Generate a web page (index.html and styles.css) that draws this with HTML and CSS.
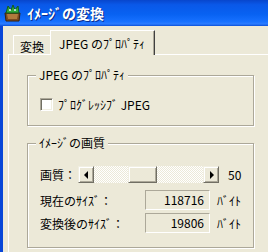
FILE: index.html
```html
<!DOCTYPE html>
<html lang="ja">
<head>
    <meta charset="UTF-8">
    <title>イメージの変換</title>
    <link rel="stylesheet" href="styles.css">
</head>
<body>

    <div class="window">
        <div class="titlebar">
            <svg class="app-icon" width="19" height="18" viewBox="0 0 19 18">
                <path d="M2 9 L17 9 L16 17 L3 17 Z" fill="#7a4a22" stroke="#3b220c" stroke-width="1"/>
                <path d="M4 10 L15 10 L14 15 L5 15 Z" fill="#b07a3c"/>
                <path d="M3 9 L5 2 L8 6 L10 1 L12 6 L15 2 L16 9 Z" fill="#2fa83a" stroke="#145a1a" stroke-width="1"/>
                <circle cx="7" cy="6" r="1" fill="#e8f0ff"/>
                <circle cx="12" cy="6" r="1" fill="#e8f0ff"/>
            </svg>
            <span class="title">ｲﾒｰｼﾞの変換</span>
        </div>

        <div class="client">
            <div class="tabs">
                <div class="tab">変換</div>
                <div class="tab active">JPEG のﾌﾟﾛﾊﾟﾃｨ</div>
            </div>

            <div class="panel">
                <fieldset class="group">
                    <legend>JPEG のﾌﾟﾛﾊﾟﾃｨ</legend>
                    <label class="check">
                        <span class="check-box"></span>
                        ﾌﾟﾛｸﾞﾚｯｼﾌﾞ JPEG
                    </label>
                </fieldset>

                <fieldset class="group quality">
                    <legend>ｲﾒｰｼﾞの画質</legend>

                    <div class="row">
                        <span class="row-label short">画質：</span>
                        <div class="scrollbar">
                            <span class="sb-btn"><span class="arrow-left"></span></span>
                            <div class="sb-track"><span class="sb-thumb"></span></div>
                            <span class="sb-btn"><span class="arrow-right"></span></span>
                        </div>
                        <span class="value">50</span>
                    </div>

                    <div class="row size-row">
                        <span class="row-label">現在のｻｲｽﾞ：</span>
                        <span class="size-box">118716</span>
                        <span class="unit">ﾊﾞｲﾄ</span>
                    </div>

                    <div class="row size-row">
                        <span class="row-label">変換後のｻｲｽﾞ：</span>
                        <span class="size-box">19806</span>
                        <span class="unit">ﾊﾞｲﾄ</span>
                    </div>
                </fieldset>
            </div>
        </div>
    </div>

</body>
</html>
```

FILE: styles.css
```css
body {
    margin: 0;
    font-family: "Noto Sans CJK JP", "Liberation Sans", sans-serif;
    font-size: 12px;
    color: #000;
}

.window {
    width: 268px;
    height: 252px;
    display: flex;
    flex-direction: column;
    overflow: hidden;
}

/* タイトルバー */
.titlebar {
    flex: none;
    height: 26px;
    display: flex;
    align-items: center;
    gap: 5px;
    padding-left: 3px;
    color: #fff;
    background: linear-gradient(to bottom, #0846cc 0, #0a58e8 18%, #0862f2 55%, #1670ff 82%, #2b7cff 92%, #0a4fd8 100%);
}

.app-icon {
    flex: none;
}

.title {
    font-size: 14px;
    font-weight: bold;
    text-shadow: 1px 1px 0 #0a2c8c;
}

.client {
    flex: 1;
    display: flex;
    flex-direction: column;
    background: #ece9d8;
    border-left: 3px solid #0846d8;
    padding-top: 4px;
}

/* タブ */
.tabs {
    display: flex;
    align-items: flex-end;
    margin-left: 10px;
    position: relative;
    z-index: 1;
}

.tab {
    height: 19px;
    display: flex;
    align-items: center;
    padding: 2px 6px 0;
    border-top: 1px solid #fff;
    border-left: 1px solid #fff;
    border-right: 1px solid #aca899;
    box-sizing: border-box;
    background: #ece9d8;
}

.tab.active {
    height: 25px;
    margin-left: -1px;
    margin-bottom: -1px;
    padding: 0 6px 0 8px;
    width: 105px;
    border-right: 1px solid #404040;
    box-shadow: inset -1px 0 0 #aca899;
}

.panel {
    width: 280px;
    margin-left: 5px;
    padding: 12px 0 0 18px;
    border-top: 1px solid #fff;
    border-left: 1px solid #fff;
    flex: 1;
    box-sizing: border-box;
}

/* グループボックス */
.group {
    width: 227px;
    box-sizing: border-box;
    margin: 0;
    padding: 13px 12px 13px;
    border: 1px solid #aca899;
    box-shadow: inset 1px 1px 0 #fff, 1px 1px 0 #fff;
}

.group legend {
    margin-left: -4px;
    padding: 0 3px;
    line-height: 16px;
    background: #ece9d8;
}

.quality {
    margin-top: 9px;
    padding-top: 15px;
    padding-bottom: 14px;
}

.check {
    display: flex;
    align-items: center;
    height: 16px;
    gap: 5px;
}

.check-box {
    width: 13px;
    height: 13px;
    box-sizing: border-box;
    background: #fff;
    border-top: 1px solid #aca899;
    border-left: 1px solid #aca899;
    border-right: 1px solid #fff;
    border-bottom: 1px solid #fff;
    box-shadow: inset 1px 1px 0 #716f64, inset -1px -1px 0 #f1efe2;
}

.row {
    display: flex;
    align-items: center;
    height: 17px;
}

.size-row {
    height: 20px;
    margin-top: 3px;
}

.size-row:nth-of-type(2) {
    margin-top: 7px;
}

.row-label {
    width: 105px;
    flex: none;
    white-space: nowrap;
}

.row-label.short {
    width: 38px;
}

/* スクロールバー */
.scrollbar {
    display: flex;
    width: 141px;
    height: 17px;
}

.sb-btn {
    flex: none;
    width: 16px;
    height: 17px;
    box-sizing: border-box;
    display: flex;
    align-items: center;
    justify-content: center;
    background: #ece9d8;
    border-top: 1px solid #f1efe2;
    border-left: 1px solid #f1efe2;
    border-right: 1px solid #716f64;
    border-bottom: 1px solid #716f64;
    box-shadow: inset 1px 1px 0 #fff, inset -1px -1px 0 #aca899;
}

.arrow-left {
    width: 0;
    height: 0;
    border-top: 4px solid transparent;
    border-bottom: 4px solid transparent;
    border-right: 4px solid #000;
}

.arrow-right {
    width: 0;
    height: 0;
    border-top: 4px solid transparent;
    border-bottom: 4px solid transparent;
    border-left: 4px solid #000;
    margin-left: 1px;
}

.sb-track {
    flex: 1;
    display: flex;
    background: repeating-conic-gradient(#fff 0 25%, #ece9d8 0 50%) 0 0 / 2px 2px;
}

.sb-thumb {
    width: 29px;
    margin-left: 34px;
    box-sizing: border-box;
    background: #ece9d8;
    border-top: 1px solid #f1efe2;
    border-left: 1px solid #f1efe2;
    border-right: 1px solid #716f64;
    border-bottom: 1px solid #716f64;
    box-shadow: inset 1px 1px 0 #fff, inset -1px -1px 0 #aca899;
}

.value {
    margin-left: 9px;
}

/* サイズ表示 */
.size-box {
    width: 65px;
    height: 20px;
    box-sizing: border-box;
    padding-right: 5px;
    text-align: right;
    line-height: 18px;
    border-top: 1px solid #aca899;
    border-left: 1px solid #aca899;
    border-right: 1px solid #fff;
    border-bottom: 1px solid #fff;
}

.unit {
    margin-left: 7px;
}
```
